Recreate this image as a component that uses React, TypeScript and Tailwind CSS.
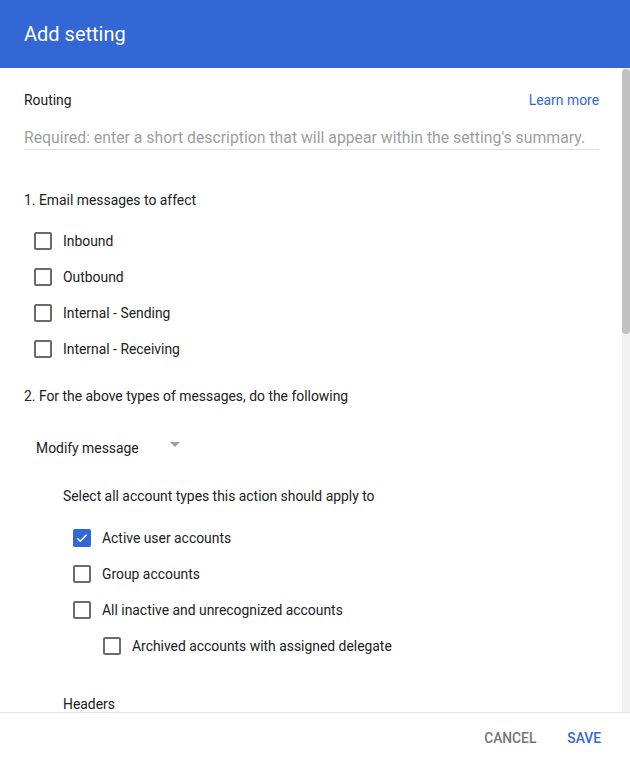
import React from 'react';

type BoxProps = { checked?: boolean };

function Box({ checked }: BoxProps) {
  if (checked) {
    return (
      <span className="flex h-[18px] w-[18px] items-center justify-center rounded-[2px] bg-[#3367d6]">
        <svg width="14" height="14" viewBox="0 0 24 24" fill="none">
          <path d="M4 12.5l5 5L20 6.5" stroke="#fff" strokeWidth="2.8" />
        </svg>
      </span>
    );
  }
  return <span className="block h-[18px] w-[18px] rounded-[2px] border-2 border-[#6b6b6b]" />;
}

function Check({ label, checked }: { label: string; checked?: boolean }) {
  return (
    <div className="flex h-9 items-center">
      <Box checked={checked} />
      <span className="ml-[11px]">{label}</span>
    </div>
  );
}

const messageTypes = ['Inbound', 'Outbound', 'Internal - Sending', 'Internal - Receiving'];

export default function App() {
  return (
    <div className="flex h-[757px] w-[630px] flex-col bg-white font-['Roboto',sans-serif] text-[13.9px] leading-5 text-[#212121]">
      <div className="flex h-[68px] shrink-0 items-center bg-[#3367d6] px-6">
        <h1 className="text-[20px] font-normal text-white">Add setting</h1>
      </div>

      <div className="flex h-[644px] overflow-hidden">
        <div className="flex-1 pl-6 pr-[23px]">
          <div className="mt-[22px] flex h-5 items-center justify-between">
            <span>Routing</span>
            <span className="text-[#3367d6]">Learn more</span>
          </div>
          <div className="mt-4 flex h-6 items-center border-b border-[#e0e0e0] text-[15.8px] text-[#9e9e9e]">
            Required: enter a short description that will appear within the setting's summary.
          </div>

          <p className="mt-[40px]">1. Email messages to affect</p>
          <div className="mt-[13px] pl-[10px]">
            {messageTypes.map((t) => (
              <Check key={t} label={t} />
            ))}
          </div>

          <p className="mt-[19px]">2. For the above types of messages, do the following</p>

          <div className="mt-[32px] flex h-5 items-center pl-3">
            <span>Modify message</span>
            <svg className="ml-[31px] -mt-2" width="10" height="5" viewBox="0 0 10 5">
              <path d="M0 0h10L5 5z" fill="#9e9e9e" />
            </svg>
          </div>

          <div className="pl-[39px]">
            <p className="mt-[28px]">Select all account types this action should apply to</p>
            <div className="mt-[14px] pl-[10px]">
              <Check label="Active user accounts" checked />
              <Check label="Group accounts" />
              <Check label="All inactive and unrecognized accounts" />
              <div className="pl-[30px]">
                <Check label="Archived accounts with assigned delegate" />
              </div>
            </div>
            <p className="mt-[30px]">Headers</p>
          </div>
        </div>

        <div className="w-2 shrink-0 bg-[#f1f1f1]">
          <div className="mt-px h-[265px] w-full rounded-[4px] bg-[#c1c1c1]" />
        </div>
      </div>

      <div className="flex flex-1 items-center justify-end gap-[31px] border-t border-[#e6e6e6] pt-[6px] pr-[29px] text-[13.8px] font-medium">
        <button className="text-[#757575]">CANCEL</button>
        <button className="text-[#3367d6]">SAVE</button>
      </div>
    </div>
  );
}
